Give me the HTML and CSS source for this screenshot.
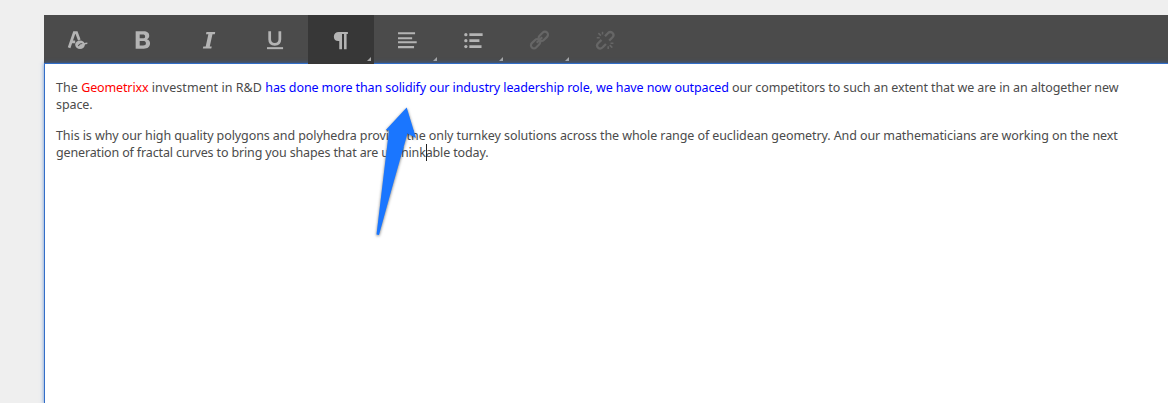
FILE: index.html
```html
<!DOCTYPE html>
<html lang="en">
<head>
<meta charset="utf-8">
<title>Rich text editor</title>
<link rel="stylesheet" href="styles.css">
</head>
<body>
<main class="editor">
  <div class="toolbar">
    <button class="tool" aria-label="Format"><svg class="icon" viewBox="0 0 24 24"><path d="M3.4 20.5 9 4h2.5l3 8M6 14h4" fill="none" stroke="currentColor" stroke-width="3"/><ellipse cx="15.3" cy="17.2" rx="5.3" ry="4.6"/><path d="M13.5 18.6c1-2.3 3.3-3.1 4.2-2" fill="none" stroke="#4b4b4b" stroke-width="1.2"/><path d="M15 18c3 0 5-2.5 8.3-2.5" fill="none" stroke="currentColor" stroke-width="1.5"/></svg></button>
    <button class="tool" aria-label="Bold"><svg class="icon" viewBox="0 0 24 24"><path fill-rule="evenodd" d="M4 2.5h8.5c4.3 0 6.3 1.7 6.3 4.8 0 1.9-1.1 3.1-2.6 3.8 2.1.5 3.5 2 3.5 4.5 0 3.9-2.6 5.9-6.9 5.9H4zM8.4 6v4.2h3.2c1.8 0 2.7-.6 2.7-2.1S13.4 6 11.6 6zM8.4 13.2V18H12c2.1 0 3.2-.7 3.2-2.4s-1.2-2.4-3.2-2.4z"/></svg></button>
    <button class="tool" aria-label="Italic"><svg class="icon" viewBox="0 0 24 24"><path d="M9.2 3.3h9.6l-.5 2.3h-2.5L12.8 19H15l-.5 2.3H5.3l.5-2.3h2.6l2.9-13.4H8.7z"/></svg></button>
    <button class="tool" aria-label="Underline"><svg class="icon" viewBox="0 0 24 24"><path d="M6.2 2.5v8.7c0 4 1.8 5.5 5.5 5.5s5.6-1.5 5.6-5.5V2.5" fill="none" stroke="currentColor" stroke-width="3"/><path d="M3.3 19.8h17.5V22H3.3z"/></svg></button>
    <button class="tool active" aria-label="Paragraph"><svg class="icon" viewBox="0 0 24 24"><path d="M9.5 3.2h10v2.2h-1.4V22h-2.8V5.4h-2.2V22h-3v-8.9C6.5 13.6 4.2 11.6 4.2 8.4c0-3.3 2.2-5.2 5.3-5.2z"/></svg><span class="corner"></span></button>
    <button class="tool" aria-label="Align"><svg class="icon" viewBox="0 0 24 24"><path d="M2.2 3.5h18.6v2.3H2.2zM2.2 8.9h15.4v2.3H2.2zM2.2 13.3h20.4v2.3H2.2zM2.2 18.6h17.5v2.3H2.2z"/></svg><span class="corner"></span></button>
    <button class="tool" aria-label="List"><svg class="icon" viewBox="0 0 24 24"><path d="M8 4.7h14.5v3H8zM8 11.2h11v3H8zM8 17.7h13.3v3H8z"/><circle cx="4.2" cy="6.2" r="1.8"/><circle cx="4.2" cy="12.7" r="1.8"/><circle cx="4.2" cy="19.2" r="1.8"/></svg><span class="corner"></span></button>
    <button class="tool disabled" aria-label="Link"><svg class="icon" viewBox="0 0 24 24"><g fill="none" stroke="currentColor" stroke-width="2.4"><rect x="10.9" y="4.7" width="11.6" height="6.6" rx="3.3" transform="rotate(-45 16.7 8)"/><rect x="2.5" y="12.7" width="11.6" height="6.6" rx="3.3" transform="rotate(-45 8.3 16)"/><path d="m9.5 15 6-6"/></g></svg><span class="corner"></span></button>
    <button class="tool disabled" aria-label="Unlink"><svg class="icon" viewBox="0 0 24 24"><g fill="none" stroke="currentColor" stroke-width="2.5"><path d="m12 8 3.4-3.6c3-3 7.9 1.1 4.8 4.7l-3.6 3.6M8.2 11.8l-3.7 3.7c-3.2 3.3 1.3 7.9 4.7 4.7l3.8-3.8"/><path stroke-width="1.7" d="m4.8 4.5 2.7 2.7M9.3 3v3M3 9.6h3.2M20 20.3l-2.8-2.7M15.5 18.7v3M18 15.5h3.2"/></g></svg></button>
  </div>
  <article class="content">
    <p class="para"><span class="lead">The </span><span class="red">Geometrixx</span><span class="lead"> investment in R&amp;D </span><span class="blue">has done more than solidify our industry leadership role, we have now outpaced</span><span class="rest"> our competitors to such an extent that we are in an altogether new</span><br>space.</p>
    <p class="para">This is why our high quality polygons and polyhedra provide the only turnkey solutions across the whole range of euclidean geometry. And our mathematicians are working on the next<br><span class="tight">generation of fractal curves to bring you shapes that are unthinkable today.</span></p>
  </article>
  <span class="caret"></span>
</main>
<svg class="pointer" viewBox="0 0 60 150"><path d="M36.7 8.5 46 39 37.5 34.5Q24 81 9 136L6.5 135.5 19 31.5 15.8 31z"/></svg>
</body>
</html>
```
FILE: styles.css
```css
* { box-sizing: border-box; }
body {
  margin: 0;
  height: 403px;
  overflow: hidden;
  padding: 15px 0 0 44px;
  background: #efefef;
  font-family: "Noto Sans", sans-serif;
}
.editor {
  position: relative;
  height: 388px;
  background: #fff;
}
.toolbar {
  display: flex;
  height: 48px;
  background: #4b4b4b;
}
.tool {
  position: relative;
  display: flex;
  align-items: center;
  justify-content: center;
  width: 66px;
  height: 48px;
  padding: 2px 0 0;
  border: 0;
  background: transparent;
  color: #b4b4b4;
}
.tool.active {
  z-index: 2;
  background: #373737;
  box-shadow: 0 1px #373737;
}
.tool.disabled { color: #666; }
.icon { width: 22px; height: 22px; fill: currentColor; }
.corner {
  position: absolute;
  right: 3px;
  bottom: 2px;
  border-left: 4px solid transparent;
  border-bottom: 4px solid #a8a8a8;
}
.content {
  position: relative;
  z-index: 1;
  height: 341px;
  border: solid #326ec8;
  border-width: 1px 0 0 1px;
  box-shadow: 0 0 4px rgba(50, 110, 200, .7);
  padding: 15px 11px;
  color: #4b4b4b;
  font-size: 12.5px;
  line-height: 17px;
  letter-spacing: -.087px;
  white-space: nowrap;
}
.para { margin: 0 0 14px; }
.lead { letter-spacing: .05px; }
.rest { letter-spacing: -.1px; }
.tight { letter-spacing: -.14px; }
.red { color: #f00; letter-spacing: -.13px; }
.blue { color: #00f; letter-spacing: -.1px; }
.caret {
  position: absolute;
  z-index: 2;
  left: 382px;
  top: 129px;
  width: 1px;
  height: 17px;
  background: #222;
}
.pointer {
  position: absolute;
  z-index: 3;
  left: 370px;
  top: 99px;
  width: 60px;
  height: 150px;
  fill: #1a76ff;
  filter: drop-shadow(0 1px 1.5px rgba(0, 0, 0, .55));
}
```
